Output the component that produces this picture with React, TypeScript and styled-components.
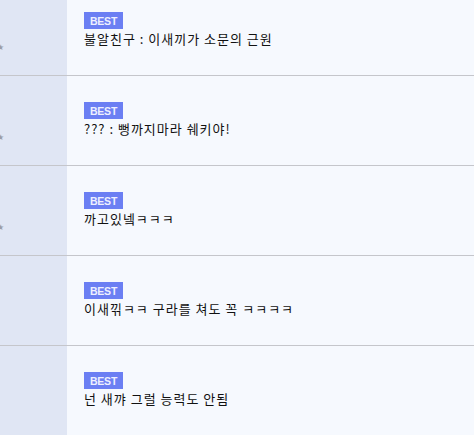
import styled, { createGlobalStyle } from "styled-components"

const Global = createGlobalStyle`
  body {
    margin: 0;
    background: #f6f9fe;
    font-family: "Noto Sans CJK KR", "Noto Sans", sans-serif;
    overflow: hidden;
  }
`

const List = styled.ul`
  list-style: none;
  margin: -14px 0 0;
  padding: 0;
`

const Row = styled.li`
  display: grid;
  grid-template-columns: 67px 1fr;
  height: 89px;
  border-bottom: 1px solid #c5c6cb;
`

const Side = styled.div`
  position: relative;
  background: #e0e6f4;
`

const Star = styled.span`
  position: absolute;
  left: -3px;
  top: 57px;
  font-family: "DejaVu Sans", sans-serif;
  font-size: 8px;
  line-height: 10px;
  color: #9a9da6;
`

const Body = styled.div`
  display: flex;
  flex-direction: column;
  align-items: flex-start;
  padding: 26px 0 0 17px;
`

const Badge = styled.span`
  display: flex;
  align-items: center;
  justify-content: center;
  width: 39px;
  height: 17px;
  background: #6b7ff3;
  color: #eef0ff;
  font-family: "Liberation Sans", Arial, sans-serif;
  font-weight: bold;
  font-size: 10.5px;
  letter-spacing: -0.2px;
`

const Title = styled.p`
  margin: 1px 0 0;
  font-size: 13px;
  line-height: 18px;
  letter-spacing: 1px;
  color: #111;
`

const items = [
  { text: "불알친구 : 이새끼가 소문의 근원", star: true },
  { text: "??? : 뻥까지마라 쉐키야!", star: true },
  { text: "까고있넼ㅋㅋㅋ", star: true },
  { text: "이새끾ㅋㅋ 구라를 쳐도 꼭 ㅋㅋㅋㅋ", star: false },
  { text: "넌 새꺄 그럴 능력도 안됨", star: false },
]

export default function App() {
  return (
    <>
      <Global />
      <List>
        {items.map((it, i) => (
          <Row key={i}>
            <Side>{it.star && <Star>★</Star>}</Side>
            <Body>
              <Badge>BEST</Badge>
              <Title>{it.text}</Title>
            </Body>
          </Row>
        ))}
      </List>
    </>
  )
}
